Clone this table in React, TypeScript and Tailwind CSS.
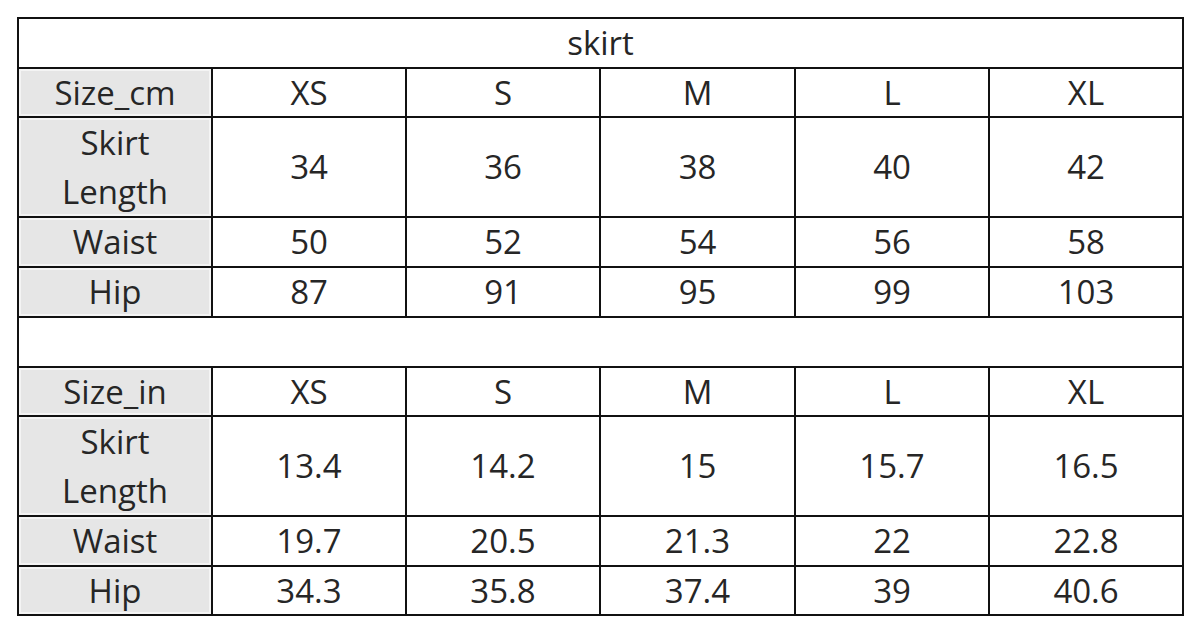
import React from "react";

const sizes = ["XS", "S", "M", "L", "XL"];

type Row = { label: React.ReactNode; values: string[]; h: string; two?: boolean };

const cmRows: Row[] = [
  { label: <>Skirt<br />Length</>, values: ["34", "36", "38", "40", "42"], h: "h-[99px]", two: true },
  { label: "Waist", values: ["50", "52", "54", "56", "58"], h: "h-[50px]" },
  { label: "Hip", values: ["87", "91", "95", "99", "103"], h: "h-[50px]" },
];

const inRows: Row[] = [
  { label: <>Skirt<br />Length</>, values: ["13.4", "14.2", "15", "15.7", "16.5"], h: "h-[99px]", two: true },
  { label: "Waist", values: ["19.7", "20.5", "21.3", "22", "22.8"], h: "h-[50px]" },
  { label: "Hip", values: ["34.3", "35.8", "37.4", "39", "40.6"], h: "h-[49px]" },
];

const cell = "border-2 border-[#111] text-center align-middle p-0 leading-[44px]";
const gray = "bg-[#e6e6e6] shadow-[inset_0_0_0_2px_#f4f4f4]";

function Block({ head, rows }: { head: string; rows: Row[] }) {
  return (
    <>
      <tr className="h-[49px]">
        <td className={`${cell} ${gray}`}>{head}</td>
        {sizes.map((s) => (
          <td key={s} className={cell}>{s}</td>
        ))}
      </tr>
      {rows.map((r, i) => (
        <tr key={i} className={r.h}>
          <td className={`${cell} ${gray} ${r.two ? "!leading-[49px]" : ""}`}>{r.label}</td>
          {r.values.map((v, j) => (
            <td key={j} className={cell}>{v}</td>
          ))}
        </tr>
      ))}
    </>
  );
}

export default function App() {
  return (
    <div className="w-[1200px] h-[632px] bg-white pt-[17px] pl-[17px]">
      <table
        className="w-[1165px] table-fixed border-collapse border-2 border-[#111] text-[#262626] text-[33px]"
        style={{ fontFamily: '"Open Sans", "Noto Sans", sans-serif' }}
      >
        <colgroup>
          <col className="w-[194px]" />
          <col className="w-[194px]" />
          <col className="w-[194px]" />
          <col className="w-[195px]" />
          <col className="w-[194px]" />
          <col className="w-[194px]" />
        </colgroup>
        <tbody>
          <tr className="h-[50px]">
            <td colSpan={6} className={cell}>skirt</td>
          </tr>
          <Block head="Size_cm" rows={cmRows} />
          <tr className="h-[50px]">
            <td colSpan={6} className={cell}></td>
          </tr>
          <Block head="Size_in" rows={inRows} />
        </tbody>
      </table>
    </div>
  );
}
